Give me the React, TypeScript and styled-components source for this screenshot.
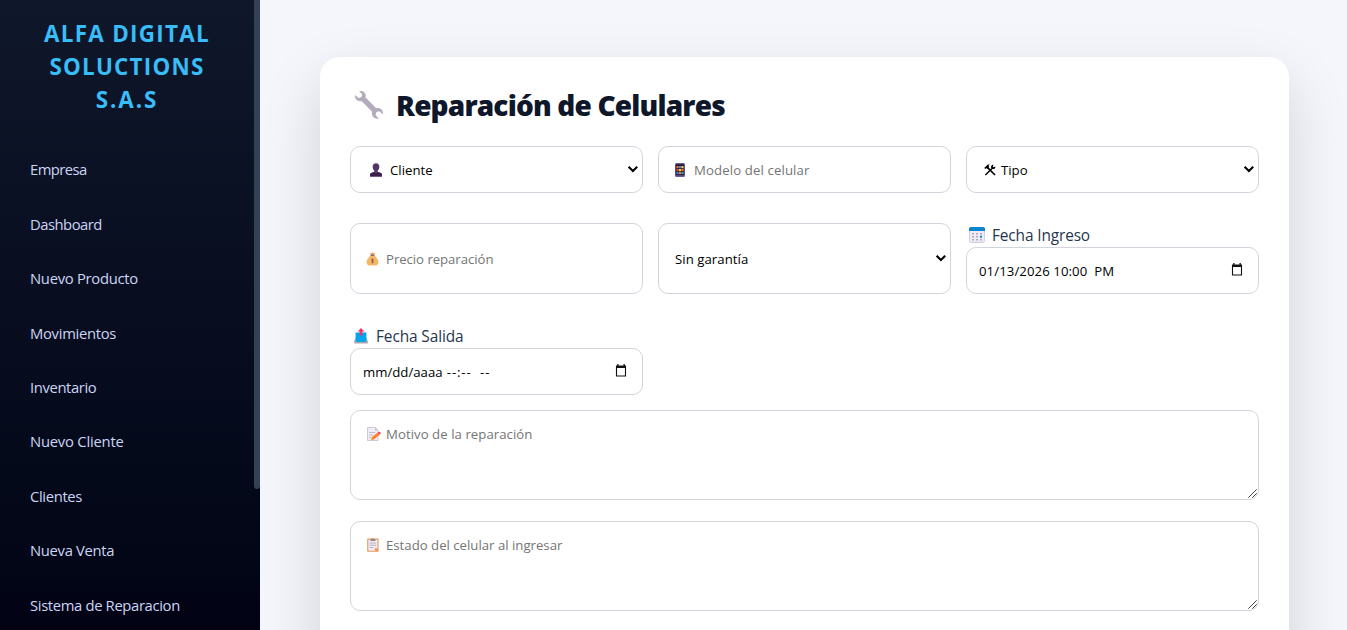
import React from 'react';
import styled, { createGlobalStyle } from 'styled-components';

const GlobalStyle = createGlobalStyle`
  *, *::before, *::after { box-sizing: border-box; }
  html, body { margin: 0; padding: 0; }
  body {
    height: 100vh;
    overflow: hidden;
    background: #f4f6fb;
    font-family: 'Open Sans', 'Noto Sans', sans-serif;
  }
  svg { display: block; flex: none; }
`;

const Page = styled.div`
  display: flex;
  height: 100vh;
  overflow: hidden;
`;

const Sidebar = styled.aside`
  flex: none;
  width: 260px;
  height: 100%;
  display: flex;
  overflow: hidden;
  background: linear-gradient(180deg, #0f172a, #020617 90%, #020213);
`;

const SidebarContent = styled.div`
  width: 254px;
  padding-top: 17px;
`;

const ScrollThumb = styled.div`
  width: 6px;
  height: 489px;
  background: #334155;
  border-radius: 0 0 3px 3px;
`;

const Brand = styled.h2`
  margin: 0 0 26px;
  font-size: 22.4px;
  line-height: 33px;
  font-weight: 700;
  text-align: center;
  color: #38bdf8;
`;

const BrandLine = styled.span<{ $ls: number }>`
  display: block;
  letter-spacing: ${(p) => p.$ls}px;
`;

const NavItem = styled.a<{ $ls: number }>`
  display: flex;
  align-items: center;
  height: 54.45px;
  padding-left: 30px;
  font-size: 14.8px;
  letter-spacing: ${(p) => p.$ls}px;
  color: #cbd5f5;
  white-space: nowrap;
`;

const Main = styled.main`
  flex: 1;
  padding: 57px 58px 0 60px;
`;

const Card = styled.section`
  height: 700px;
  padding: 29px 30px 30px;
  background: #fff;
  border-radius: 20px;
  box-shadow: 0 25px 60px rgba(0, 0, 0, 0.15);
`;

const Title = styled.h1`
  display: flex;
  align-items: center;
  gap: 12px;
  height: 37px;
  margin: 0 0 23px;
  padding-left: 4px;
  font-size: 28px;
  font-weight: 800;
  letter-spacing: -0.82px;
  color: #0f172a;
  white-space: nowrap;
`;

const Grid = styled.div`
  display: grid;
  grid-template-columns: repeat(3, 293px);
  column-gap: 15px;
  row-gap: 30px;
  margin-bottom: 15px;
`;

const Group = styled.div`
  display: flex;
  flex-direction: column;
`;

const Label = styled.div<{ $ls: number; $gap: number; $pad: number }>`
  display: flex;
  align-items: center;
  gap: ${(p) => p.$gap}px;
  height: 24px;
  padding-left: ${(p) => p.$pad}px;
  font-size: 15.4px;
  letter-spacing: ${(p) => p.$ls}px;
  color: #26364d;
  white-space: nowrap;
`;

const Field = styled.div<{ $pad: number; $gap?: number; $muted?: boolean; $ls?: number }>`
  display: flex;
  align-items: center;
  gap: ${(p) => p.$gap ?? 0}px;
  min-height: 47px;
  flex: none;
  padding: 1px 4px 0 ${(p) => p.$pad}px;
  border: 1px solid #d1d5db;
  border-radius: 10px;
  background: #fff;
  font-size: 13.2px;
  letter-spacing: ${(p) => p.$ls ?? 0}px;
  color: ${(p) => (p.$muted ? '#757575' : '#000')};
  white-space: pre;
`;

const Dashes = styled.span`
  letter-spacing: 0.85px;
`;

const Spacer = styled.span`
  flex: 1;
`;

const PickerSlot = styled.span`
  padding: 0 11px 3px 0;
`;

const Area = styled(Field)`
  position: relative;
  align-items: flex-start;
  height: 90px;
  padding-top: 14px;
  margin-bottom: 21px;
`;

const AreaRow = styled.div<{ $gap: number }>`
  display: flex;
  align-items: center;
  gap: ${(p) => p.$gap}px;
`;

const Grip = styled.svg`
  position: absolute;
  right: 1px;
  bottom: 1px;
`;

const Chevron = () => (
  <svg width="11" height="10" viewBox="0 0 11 10">
    <path d="M1.6 1.8 L5.9 6 L10.200 1.8" fill="none" stroke="#000" strokeWidth="2.1" />
  </svg>
);

const PickerIcon = () => (
  <svg width="12" height="13" viewBox="0 0 12 13">
    <path d="M1.500 2.500h9v9.500h-9z" fill="none" stroke="#111" strokeWidth="1.100" />
    <path d="M1 1.500h10v2.500H1zM2.200 0h1.300v2H2.200zM8.500 0h1.300v2H8.500z" fill="#111" />
  </svg>
);

const ResizeGrip = () => (
  <Grip width="9" height="9" viewBox="0 0 9 9">
    <path d="M.3 8.7 8.7.3M4.3 8.7 8.7 4.3" stroke="#444" strokeWidth="1" fill="none" />
  </Grip>
);

const Wrench = () => (
  <svg width="30" height="30" viewBox="0 0 30 30">
    <path
      d="M5.2 1.3C7.9.2 11 1.7 11.6 4.6c.2 1 .1 1.8-.2 2.7l10.8 10.9c3.300-.9 6.600 1.300 6.700 4.700 0 .5-.1 1-.2 1.500l-3.200-3.100-3 .8-.9 3 3.100 3.300c-3.300 1-6.800-1.400-6.800-4.900 0-.6.100-1.200.3-1.700L7.500 11C4.500 11.900 1.200 9.800 1 6.500 1 6 1.100 5.500 1.200 5l3.200 3 2.900-.8.9-2.900z"
      fill="#b4acbc"
    />
  </svg>
);

const Person = () => (
  <svg width="12" height="14" viewBox="0 0 12 14">
    <path d="M6 .3c2.200 0 3.300 1.500 3.300 3.500 0 1.700-.6 3.200-1.600 4v1l3 1.200c.8.400 1.200 1 1.200 2v1.500H.1V12c0-1 .4-1.600 1.200-2l3-1.200v-1c-1-.8-1.600-2.300-1.600-4C2.700 1.800 3.800.3 6 .3z" fill="#533566" />
    <path d="M.1 13.500V12c0-1 .4-1.600 1.200-2l2-.8c1.500 1.300 3.900 1.300 5.400 0l2 .8c.8.400 1.200 1 1.200 2v1.500z" fill="#3b1f4a" />
  </svg>
);

const Phone = () => (
  <svg width="10" height="14" viewBox="0 0 10 14">
    <rect width="10" height="14" rx="1.500" fill="#6b5c9c" />
    <rect x=".8" y="1.300" width="8.400" height="11" fill="#21172f" />
    <path d="M1.500 3h2.200v2.200H1.500zM6.400 6h2.200v2.200H6.400zM4 9h2v2.200H4z" fill="#f5762c" />
    <path d="M4 3h2v2.200H4zM1.500 9h2.200v2.200H1.500z" fill="#3f8de0" />
    <path d="M6.400 3h2.200v2.200H6.400zM4 6h2v2.200H4z" fill="#f4cf4a" />
    <path d="M1.500 6h2.200v2.200H1.500z" fill="#e34e35" />
    <path d="M6.400 9h2.200v2.200H6.400z" fill="#2fa4d8" />
  </svg>
);

const Tools = () => (
  <svg width="12" height="12" viewBox="0 0 12 12">
    <path d="M3.400 3.400 11 11" stroke="#000" strokeWidth="1.700" fill="none" />
    <path d="M.2 4 3.800.5l2 .1-1.300 1.200.8 1-2.100 2.100-1-.8-.8.9z" fill="#000" />
    <path d="M1.400 11 8 4.400" stroke="#000" strokeWidth="1.400" fill="none" />
    <path d="M9.600.8 8.800 2.400l.9.900 1.700-.8c.2 1.500-.9 2.800-2.300 2.600-1.500-.1-2.400-1.400-2-2.700C7.400 1.300 8.500.6 9.600.8z" fill="#000" />
  </svg>
);

const MoneyBag = () => (
  <svg width="13" height="14" viewBox="-.5 0 13 14">
    <path d="M3.500.9 5 1.300 6 .2l1 1.100 1.500-.4L7.700 3H4.300z" fill="#e8a65b" />
    <path d="M4.400 3.600h3.200c2.400 1.500 4.300 4 4.300 6.600 0 2.200-1.500 3.400-3.600 3.400H3.700C1.600 13.600.1 12.400.1 10.200c0-2.600 1.900-5.100 4.300-6.600z" fill="#f4b768" />
    <path d="M4 2.700h4v1.100H4z" fill="#7c4b45" />
    <path d="M7.200 7.400H5.600c-.9 0-.9 1.400 0 1.400h.9c1 0 1 1.500 0 1.500H4.800M6 6.500v4.900" fill="none" stroke="#8c5543" strokeWidth=".75" />
  </svg>
);

const Calendar = () => (
  <svg width="16" height="16" viewBox="0 0 16 16">
    <rect x=".4" y=".5" width="15.200" height="15" rx="2" fill="#f0eaf5" stroke="#c9bfd3" strokeWidth=".8" />
    <path d="M0 4V2C0 .8.8 0 2 0h12c1.200 0 2 .8 2 2v2z" fill="#0b84d0" />
    <path d="M3.200 6h1.600v1.600H3.200zM7.200 6h1.600v1.600H7.200zM11.200 6h1.600v1.600h-1.600zM3.200 9h1.600v1.600H3.200zM7.200 9h1.600v1.600H7.200zM3.200 12h1.600v1.600H3.200zM7.200 12h1.600v1.600H7.200zM11.200 12h1.600v1.600h-1.600z" fill="#a49baf" />
    <path d="M11 8.800h2v2h-2z" fill="#0b84d0" />
  </svg>
);

const Outbox = () => (
  <svg width="14" height="16" viewBox="0 0 14 16">
    <path d="M1.500 10.500h11l1.400 2.700v1.300c0 .7-.4 1-1 1H1.100c-.6 0-1-.3-1-1v-1.300z" fill="#aaa6af" />
    <path d="M1.600 4.500h10.800v8.200l-1.800 1.300H3.400l-1.800-1.300z" fill="#00a5ee" />
    <path d="M7 0l3.300 3.600H8.300V7.500H5.700V3.600h-2z" fill="#f43462" />
  </svg>
);

const Memo = () => (
  <svg width="14" height="14" viewBox="0 0 14 14">
    <path d="M.5.500h7.700L11 3.300v10.200H.5z" fill="#f1edf6" stroke="#cbc2d3" strokeWidth=".9" />
    <path d="M8 .5v3h3" fill="#c5bbcf" />
    <path d="M2.200 5.500h6M2.200 8h4M2.200 10.500h2" stroke="#b5acc0" strokeWidth=".8" />
    <path d="m4 13 1-3 5.800-4.400 1.800 2.200-5.700 4.600z" fill="#ff8228" />
    <path d="m10.800 5.600.9-.7c1.200-.5 2.600 1.100 1.700 2.200l-.9.700z" fill="#f43462" />
  </svg>
);

const Clipboard = () => (
  <svg width="12" height="14" viewBox="0 0 12 14">
    <rect x=".2" y=".6" width="11.400" height="13.200" rx=".8" fill="#e39a58" />
    <path d="M1.300 1.800h9.200v8.500L8 12.700H1.300z" fill="#f0ebf5" />
    <path d="M10.500 10.300H8v2.400z" fill="#ff7f2a" />
    <path d="M3.500 1.200h1.300c.3-1.300 2-1.300 2.300 0h1.300v1.700H3.500z" fill="#8b8491" />
    <path d="M2.500 5h6.800M2.500 7.200h6.800M2.500 9.500h4" stroke="#b2a9bc" strokeWidth=".9" />
  </svg>
);

const brand: [string, number][] = [
  ['ALFA DIGITAL', 1.32],
  ['SOLUCTIONS', 1.25],
  ['S.A.S', 1.9],
];

const nav: [string, number][] = [
  ['Empresa', -0.55],
  ['Dashboard', -0.5],
  ['Nuevo Producto', -0.28],
  ['Movimientos', -0.3],
  ['Inventario', -0.38],
  ['Nuevo Cliente', -0.22],
  ['Clientes', -0.35],
  ['Nueva Venta', -0.32],
  ['Sistema de Reparacion', -0.35],
];

export default function App() {
  return (
    <Page>
      <GlobalStyle />
      <Sidebar>
        <SidebarContent>
          <Brand>
            {brand.map(([text, ls]) => (
              <BrandLine key={text} $ls={ls}>{text}</BrandLine>
            ))}
          </Brand>
          <nav>
            {nav.map(([text, ls]) => (
              <NavItem key={text} $ls={ls}>{text}</NavItem>
            ))}
          </nav>
        </SidebarContent>
        <ScrollThumb />
      </Sidebar>
      <Main>
        <Card>
          <Title>
            <Wrench />
            <span>Reparación de Celulares</span>
          </Title>
          <Grid>
            <Field $pad={19} $gap={8} $ls={0.03}>
              <Person />
              <span>Cliente</span>
              <Spacer />
              <Chevron />
            </Field>
            <Field $pad={16} $gap={9} $muted $ls={0.12}>
              <Phone />
              <span>Modelo del celular</span>
            </Field>
            <Field $pad={17} $gap={5}>
              <Tools />
              <span>Tipo</span>
              <Spacer />
              <Chevron />
            </Field>
            <Field $pad={15} $gap={7} $muted $ls={-0.05}>
              <MoneyBag />
              <span>Precio reparación</span>
            </Field>
            <Field $pad={16} $ls={0.05}>
              <span>Sin garantía</span>
              <Spacer />
              <Chevron />
            </Field>
            <Group>
              <Label $ls={-0.12} $gap={7} $pad={3}>
                <Calendar />
                <span>Fecha Ingreso</span>
              </Label>
              <Field $pad={12} $ls={0.08}>
                <span>01/13/2026 10:00  PM</span>
                <Spacer />
                <PickerSlot><PickerIcon /></PickerSlot>
              </Field>
            </Group>
            <Group>
              <Label $ls={-0.1} $gap={8} $pad={4}>
                <Outbox />
                <span>Fecha Salida</span>
              </Label>
              <Field $pad={12}>
                <span>mm/dd/aaaa<Dashes> --:--  --</Dashes></span>
                <Spacer />
                <PickerSlot><PickerIcon /></PickerSlot>
              </Field>
            </Group>
          </Grid>
          <Area $pad={16} $muted $ls={0.05}>
            <AreaRow $gap={5}>
              <Memo />
              <span>Motivo de la reparación</span>
            </AreaRow>
            <ResizeGrip />
          </Area>
          <Area $pad={16} $muted>
            <AreaRow $gap={7}>
              <Clipboard />
              <span>Estado del celular al ingresar</span>
            </AreaRow>
            <ResizeGrip />
          </Area>
        </Card>
      </Main>
    </Page>
  );
}
